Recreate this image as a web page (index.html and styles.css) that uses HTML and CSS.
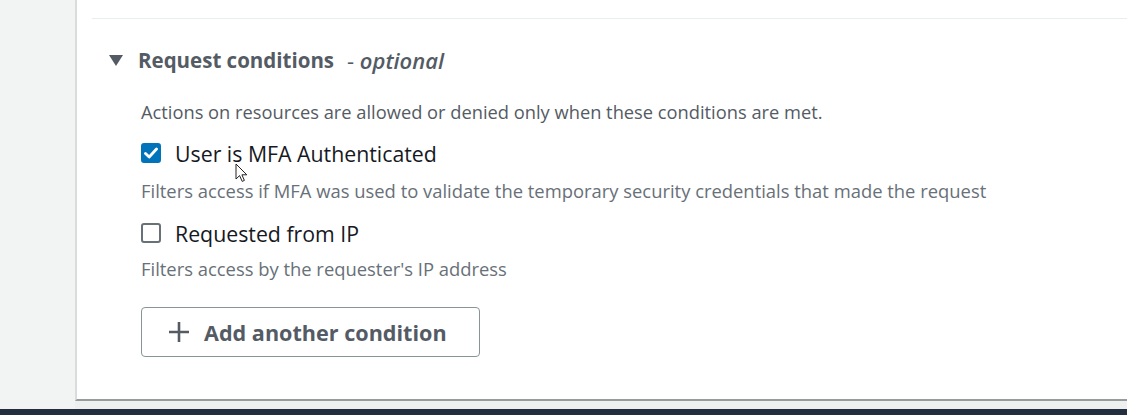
FILE: index.html
```html
<!DOCTYPE html>
<html>
<head>
<meta charset="utf-8">
<link rel="stylesheet" href="styles.css">
</head>
<body>
<div class="page">
  <div class="side"></div>
  <div class="main">
    <div class="card">
      <div class="divider"></div>
      <div class="section-head">
        <svg class="caret" width="14" height="11" viewBox="0 0 14 11"><path d="M0 0 H14 L7 11 Z" fill="#545b64"/></svg>
        <span class="title">Request conditions</span>
        <span class="opt">- <i>optional</i></span>
      </div>
      <div class="body">
        <p class="desc">Actions on resources are allowed or denied only when these conditions are met.</p>
        <div class="check-row">
          <span class="box checked">
            <svg width="14" height="12" viewBox="0 0 14 12"><path d="M1.5 6.5 L5.2 10 L12.5 2" fill="none" stroke="#fff" stroke-width="2.8" stroke-linecap="round" stroke-linejoin="round"/></svg>
          </span>
          <span class="label">User is MFA Authenticated</span>
          <svg class="cursor" width="14" height="20" viewBox="0 0 14 20"><path d="M1 1 V16 L4.6 12.6 L7.2 18.4 L9.4 17.4 L6.9 11.8 L11.8 11.8 Z" fill="#fff" stroke="#222" stroke-width="1"/></svg>
        </div>
        <p class="hint">Filters access if MFA was used to validate the temporary security credentials that made the request</p>
        <div class="check-row second">
          <span class="box"></span>
          <span class="label">Requested from IP</span>
        </div>
        <p class="hint last">Filters access by the requester's IP address</p>
        <button class="add-btn">
          <svg width="22" height="22" viewBox="0 0 22 22"><path d="M11 1 V21 M1 11 H21" stroke="#545b64" stroke-width="2.6"/></svg>
          <span>Add another condition</span>
        </button>
      </div>
    </div>
    <div class="strip"></div>
  </div>
  <div class="footer"></div>
</div>
</body>
</html>
```

FILE: styles.css
```css
* { box-sizing: border-box; }
html, body { margin: 0; padding: 0; }
body {
  width: 1127px;
  height: 415px;
  overflow: hidden;
  background: #f2f3f3;
  font-family: "Open Sans", "Noto Sans", sans-serif;
}
.page {
  display: grid;
  grid-template-columns: 75px 1fr;
  grid-template-rows: 409px 6px;
  height: 415px;
}
.side { background: #f2f3f3; }
.main {
  display: flex;
  flex-direction: column;
}
.card {
  flex: 1;
  background: #fff;
  border-left: 2px solid #d9dcdc;
  border-bottom: 2px solid #979b9b;
  padding-left: 15px;
  position: relative;
}
.divider {
  height: 1px;
  background: #eaeded;
  margin-top: 18px;
}
.section-head {
  display: flex;
  align-items: center;
  height: 40px;
  margin-top: 21px;
  padding-left: 17px;
  color: #545b64;
}
.caret { margin-right: 15px; }
.title {
  font-weight: 700;
  font-size: 20.5px;
}
.opt {
  font-size: 22px;
  margin-left: 13px;
}
.opt i { font-weight: 600; }
.body {
  padding-left: 49px;
}
.desc {
  margin: 20px 0 0;
  font-size: 18.3px;
  line-height: 24px;
  color: #545b64;
}
.check-row {
  display: flex;
  align-items: center;
  height: 24px;
  margin-top: 17px;
  position: relative;
}
.check-row.second { margin-top: 18px; }
.box {
  width: 20px;
  height: 20px;
  border: 2px solid #687078;
  border-radius: 3px;
  display: flex;
  align-items: center;
  justify-content: center;
  background: #fff;
}
.box.checked {
  background: #0073bb;
  border-color: #0073bb;
}
.label {
  margin-left: 14px;
  font-size: 21.3px;
  color: #16191f;
}
.cursor {
  position: absolute;
  left: 94px;
  top: 22px;
}
.hint {
  margin: 14px 0 0;
  font-size: 18.4px;
  line-height: 24px;
  color: #687078;
}
.hint.last { margin-top: 12px; }
.add-btn {
  margin-top: 26px;
  display: flex;
  align-items: center;
  width: 339px;
  height: 50px;
  padding: 0 0 0 26px;
  background: #fff;
  border: 1px solid #879596;
  border-radius: 4px;
  font-family: inherit;
  font-weight: 700;
  font-size: 21.6px;
  color: #545b64;
}
.add-btn svg { margin-right: 14px; }
.strip {
  height: 8px;
  background: #eef0f0;
}
.footer {
  grid-column: 1 / 3;
  background: #232f3e;
}
```
